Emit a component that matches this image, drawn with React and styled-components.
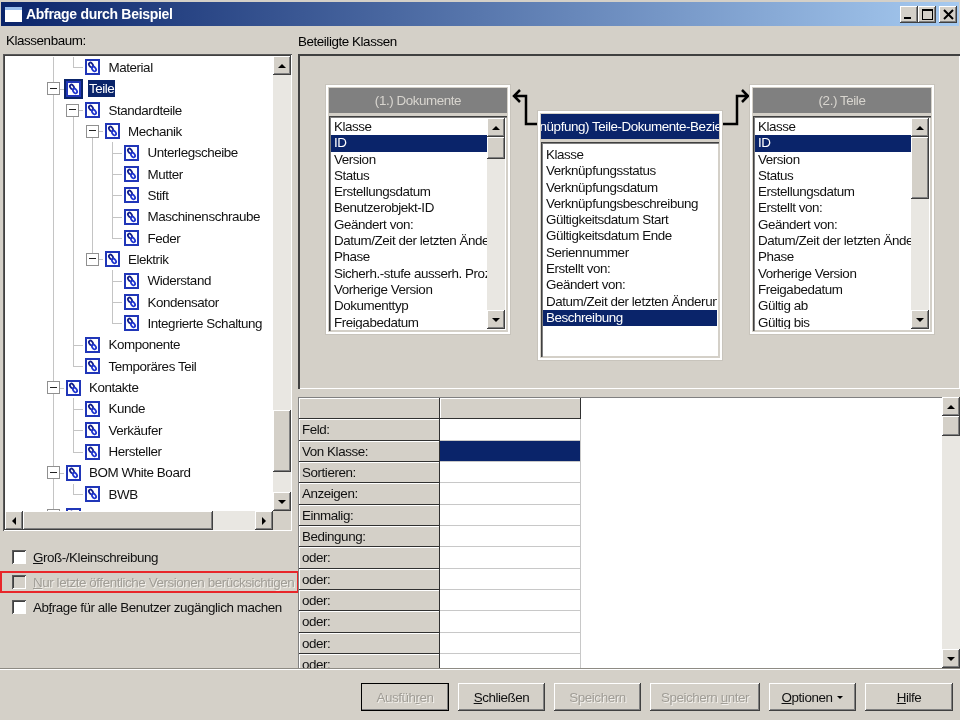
import React from 'react';
import styled, { createGlobalStyle, css } from 'styled-components';

const raised = css`
    background: #d4d0c8;
    box-shadow: inset -1px -1px 0 #404040, inset 1px 1px 0 #ffffff, inset -2px -2px 0 #808080;
`;
const sunken = css`
    box-shadow: inset 1px 1px 0 #5a5a5a, inset -1px -1px 0 #ffffff, inset 2px 2px 0 #404040;
`;

const baum = [
    { name: 'Material', level: 1, guides: ['pipe', 'elbow'] },
    { name: 'Teile', level: 0, guides: ['tee'], open: true, selected: true },
    { name: 'Standardteile', level: 1, guides: ['pipe', 'start'], open: true },
    { name: 'Mechanik', level: 2, guides: ['pipe', 'pipe', 'start'], open: true },
    { name: 'Unterlegscheibe', level: 3, guides: ['pipe', 'pipe', 'pipe', 'tee'] },
    { name: 'Mutter', level: 3, guides: ['pipe', 'pipe', 'pipe', 'tee'] },
    { name: 'Stift', level: 3, guides: ['pipe', 'pipe', 'pipe', 'tee'] },
    { name: 'Maschinenschraube', level: 3, guides: ['pipe', 'pipe', 'pipe', 'tee'] },
    { name: 'Feder', level: 3, guides: ['pipe', 'pipe', 'pipe', 'elbow'] },
    { name: 'Elektrik', level: 2, guides: ['pipe', 'pipe', 'elbow'], open: true },
    { name: 'Widerstand', level: 3, guides: ['pipe', 'pipe', 'none', 'tee'] },
    { name: 'Kondensator', level: 3, guides: ['pipe', 'pipe', 'none', 'tee'] },
    { name: 'Integrierte Schaltung', level: 3, guides: ['pipe', 'pipe', 'none', 'elbow'] },
    { name: 'Komponente', level: 1, guides: ['pipe', 'tee'] },
    { name: 'Temporäres Teil', level: 1, guides: ['pipe', 'elbow'] },
    { name: 'Kontakte', level: 0, guides: ['tee'], open: true },
    { name: 'Kunde', level: 1, guides: ['pipe', 'tee'] },
    { name: 'Verkäufer', level: 1, guides: ['pipe', 'tee'] },
    { name: 'Hersteller', level: 1, guides: ['pipe', 'elbow'] },
    { name: 'BOM White Board', level: 0, guides: ['tee'], open: true },
    { name: 'BWB', level: 1, guides: ['pipe', 'elbow'] },
    { name: 'Projekte', level: 0, guides: ['tee'], open: true },
];

const dokumente = ['Klasse', 'ID', 'Version', 'Status', 'Erstellungsdatum', 'Benutzerobjekt-ID', 'Geändert von:', 'Datum/Zeit der letzten Änderung', 'Phase', 'Sicherh.-stufe ausserh. Prozess', 'Vorherige Version', 'Dokumenttyp', 'Freigabedatum'];
const verknuepfung = ['Klasse', 'Verknüpfungsstatus', 'Verknüpfungsdatum', 'Verknüpfungsbeschreibung', 'Gültigkeitsdatum Start', 'Gültigkeitsdatum Ende', 'Seriennummer', 'Erstellt von:', 'Geändert von:', 'Datum/Zeit der letzten Änderung', 'Beschreibung'];
const teile = ['Klasse', 'ID', 'Version', 'Status', 'Erstellungsdatum', 'Erstellt von:', 'Geändert von:', 'Datum/Zeit der letzten Änderung', 'Phase', 'Vorherige Version', 'Freigabedatum', 'Gültig ab', 'Gültig bis'];
const zeilen = ['Feld:', 'Von Klasse:', 'Sortieren:', 'Anzeigen:', 'Einmalig:', 'Bedingung:', 'oder:', 'oder:', 'oder:', 'oder:', 'oder:', 'oder:'];

function KlassenIcon() {
    return (
        <svg width="15" height="16" viewBox="0 0 15 16">
            <rect x="1" y="1" width="13" height="14" fill="#ffffff" stroke="#2036b8" strokeWidth="2" />
            <ellipse cx="6" cy="6" rx="1.7" ry="2.6" transform="rotate(-35 6 6)" fill="none" stroke="#14208c" strokeWidth="1.8" />
            <ellipse cx="9" cy="10" rx="1.7" ry="2.6" transform="rotate(-35 9 10)" fill="none" stroke="#2036d0" strokeWidth="1.8" />
        </svg>
    );
}

function Scrollbar({ thumbTop, thumbHeight }) {
    return (
        <VScroll>
            <ScrollButton><Arrow dir="up" /></ScrollButton>
            <VTrack>
                <VThumb top={thumbTop} size={thumbHeight} />
            </VTrack>
            <ScrollButton><Arrow dir="down" /></ScrollButton>
        </VScroll>
    );
}

function KlassenFenster({ x, y, titel, active, eintraege, selected, thumbTop, thumbHeight }) {
    return (
        <Fenster x={x} y={y}>
            <FensterTitel active={active}><span>{titel}</span></FensterTitel>
            <ListFrame>
                <Liste active={active}>
                    {eintraege.map((e, i) => <ListItem key={i} selected={e === selected}>{e}</ListItem>)}
                </Liste>
                {thumbHeight ? <Scrollbar thumbTop={thumbTop} thumbHeight={thumbHeight} /> : null}
            </ListFrame>
        </Fenster>
    );
}

export default function App() {
    return (
        <>
            <Global />
            <Dialog>
                <TitleBar>
                    <TitleIcon />
                    <TitleText>Abfrage durch Beispiel</TitleText>
                    <WindowButtons>
                        <WindowButton><MinGlyph /></WindowButton>
                        <WindowButton><MaxGlyph /></WindowButton>
                        <WindowButton close>
                            <svg width="11" height="11" viewBox="0 0 11 11">
                                <path d="M1 1 L10 10 M10 1 L1 10" stroke="#000" strokeWidth="2" />
                            </svg>
                        </WindowButton>
                    </WindowButtons>
                </TitleBar>
                <Body>
                    <LeftColumn>
                        <Heading>Klassenbaum:</Heading>
                        <TreeFrame>
                            <TreeTop>
                                <TreeList>
                                    {baum.map(k => (
                                        <TreeRow key={k.name}>
                                            {k.guides.map((g, i) => (
                                                <Guide key={i} kind={g}>
                                                    {k.open && i === k.level ? <Expander /> : null}
                                                </Guide>
                                            ))}
                                            <IconCell selected={k.selected}><KlassenIcon /></IconCell>
                                            <TreeLabel selected={k.selected}>{k.name}</TreeLabel>
                                        </TreeRow>
                                    ))}
                                </TreeList>
                                <Scrollbar thumbTop={335} thumbHeight={62} />
                            </TreeTop>
                            <HScrollRow>
                                <HScroll>
                                    <ScrollButton><Arrow dir="left" /></ScrollButton>
                                    <HThumb />
                                    <HTrack />
                                    <ScrollButton><Arrow dir="right" /></ScrollButton>
                                </HScroll>
                                <Corner />
                            </HScrollRow>
                        </TreeFrame>
                        <Options>
                            <CheckRow>
                                <CheckBox />
                                <CheckLabel><u>G</u>roß-/Kleinschreibung</CheckLabel>
                            </CheckRow>
                            <CheckRow marked>
                                <CheckBox disabled />
                                <CheckLabel disabled><u>N</u>ur letzte öffentliche Versionen berücksichtigen</CheckLabel>
                            </CheckRow>
                            <CheckRow>
                                <CheckBox />
                                <CheckLabel>Ab<u>f</u>rage für alle Benutzer zugänglich machen</CheckLabel>
                            </CheckRow>
                        </Options>
                    </LeftColumn>
                    <RightColumn>
                        <Heading>Beteiligte Klassen</Heading>
                        <Canvas>
                            <Verbinder width="662" height="335">
                                <path d="M240 70 H228 V42 H216 M222 36 L216 42 L222 48" />
                                <path d="M424 70 H439 V42 H449 M444 36 L450 42 L444 48" />
                            </Verbinder>
                            <KlassenFenster x={28} y={31} titel="(1.) Dokumente" eintraege={dokumente} selected="ID" thumbTop={0} thumbHeight={22} />
                            <KlassenFenster x={240} y={57} titel="(Verknüpfung) Teile-Dokumente-Beziehung" active eintraege={verknuepfung} selected="Beschreibung" />
                            <KlassenFenster x={452} y={31} titel="(2.) Teile" eintraege={teile} selected="ID" thumbTop={0} thumbHeight={62} />
                        </Canvas>
                        <GridSection>
                            <GridTable>
                                <HeaderCell />
                                <HeaderCell />
                                {zeilen.map((z, i) => (
                                    <React.Fragment key={i}>
                                        <RowHeader>{z}</RowHeader>
                                        <ValueCell selected={i === 1} />
                                    </React.Fragment>
                                ))}
                            </GridTable>
                            <Scrollbar thumbTop={0} thumbHeight={20} />
                        </GridSection>
                    </RightColumn>
                </Body>
                <Footer>
                    <Button width={88} disabled isDefault><span>Ausfüh<u>r</u>en</span></Button>
                    <Button width={87}><span><u>S</u>chließen</span></Button>
                    <Button width={87} disabled><span>Speichern</span></Button>
                    <Button width={110} disabled><span>Speichern <u>u</u>nter</span></Button>
                    <Button width={87}><span><u>O</u>ptionen</span><Caret /></Button>
                    <Button width={88}><span><u>H</u>ilfe</span></Button>
                </Footer>
            </Dialog>
        </>
    );
}

const Global = createGlobalStyle`
    html, body {
        margin: 0;
        padding: 0;
        background: #d4d0c8;
    }
    * {
        box-sizing: border-box;
    }
`;
const Dialog = styled.div`
    width: 960px;
    height: 720px;
    overflow: hidden;
    display: flex;
    flex-direction: column;
    background: #d4d0c8;
    padding-top: 2px;
    font-family: "Liberation Sans", Arial, sans-serif;
    font-size: 13.4px;
    letter-spacing: -0.43px;
    color: #000;
    filter: blur(0.35px);
`;
const TitleBar = styled.div`
    height: 24px;
    margin: 0 1px;
    flex: none;
    display: flex;
    align-items: center;
    padding: 0 2px 0 4px;
    background: linear-gradient(to right, #0a246a, #a6caf0);
`;
const TitleIcon = styled.div`
    width: 17px;
    height: 15px;
    background: #ffffff;
    border-top: 3px solid #9cc0ee;
    margin-right: 4px;
`;
const TitleText = styled.div`
    color: #ffffff;
    font-weight: bold;
    font-size: 14px;
    letter-spacing: -0.3px;
`;
const WindowButtons = styled.div`
    margin-left: auto;
    display: flex;
`;
const WindowButton = styled.div`
    ${raised}
    width: 18px;
    height: 17px;
    margin-left: ${props => props.close ? '3px' : '0'};
    display: flex;
    align-items: center;
    justify-content: center;
`;
const MinGlyph = styled.div`
    width: 7px;
    height: 2px;
    background: #000;
    margin-top: 8px;
    margin-right: 3px;
`;
const MaxGlyph = styled.div`
    width: 11px;
    height: 11px;
    border: 1px solid #000;
    border-top-width: 2px;
`;
const Body = styled.div`
    height: 642px;
    flex: none;
    display: flex;
`;
const LeftColumn = styled.div`
    width: 298px;
    flex: none;
    padding-left: 3px;
    display: flex;
    flex-direction: column;
`;
const RightColumn = styled.div`
    flex: 1;
    min-width: 0;
    display: flex;
    flex-direction: column;
`;
const Heading = styled.div`
    height: 28px;
    flex: none;
    padding: 7px 0 0 3px;
    white-space: nowrap;
    ${RightColumn} & {
        padding: 8px 0 0;
    }
`;
const TreeFrame = styled.div`
    ${sunken}
    width: 289px;
    height: 477px;
    flex: none;
    padding: 2px 1px 1px 2px;
    display: flex;
    flex-direction: column;
    background: #ffffff;
`;
const TreeTop = styled.div`
    flex: 1;
    min-height: 0;
    display: flex;
`;
const TreeList = styled.div`
    flex: 1;
    min-width: 0;
    padding: 0.7px 0 0 39px;
    overflow: hidden;
`;
const TreeRow = styled.div`
    height: 21.35px;
    display: flex;
    align-items: center;
    white-space: nowrap;
`;
const Guide = styled.div`
    position: relative;
    width: 19.5px;
    height: 100%;
    flex: none;
    display: flex;
    align-items: center;
    justify-content: center;
    ${props => props.kind !== 'none' && css`
        &::before {
            content: '';
            position: absolute;
            left: 9px;
            top: ${props.kind === 'start' ? '50%' : '0'};
            bottom: ${props.kind === 'elbow' ? '50%' : '0'};
            border-left: 1px solid #c4c4c4;
        }
    `}
    ${props => (props.kind === 'tee' || props.kind === 'elbow' || props.kind === 'start') && css`
        &::after {
            content: '';
            position: absolute;
            left: 9px;
            right: 0;
            top: 50%;
            border-top: 1px solid #c4c4c4;
        }
    `}
`;
const Expander = styled.div`
    position: relative;
    z-index: 1;
    width: 13px;
    height: 13px;
    background: #ffffff;
    border: 1.5px solid #909090;
    margin-left: -1px;
    &::after {
        content: '';
        position: absolute;
        left: 2px;
        right: 2px;
        top: 4.5px;
        height: 1px;
        background: #222;
    }
`;
const IconCell = styled.div`
    width: 19.5px;
    height: 100%;
    flex: none;
    display: flex;
    align-items: center;
    justify-content: center;
    svg {
        outline: ${props => props.selected ? '2px solid #0a246a' : 'none'};
    }
`;
const TreeLabel = styled.div`
    margin-left: 5px;
    padding: 0 1px;
    line-height: 17px;
    color: ${props => props.selected ? '#ffffff' : '#111'};
    background: ${props => props.selected ? '#0a246a' : 'transparent'};
`;
const VScroll = styled.div`
    width: 18px;
    flex: none;
    display: flex;
    flex-direction: column;
`;
const ScrollButton = styled.div`
    ${raised}
    width: 18px;
    height: 19px;
    flex: none;
    display: flex;
    align-items: center;
    justify-content: center;
`;
const Arrow = styled.div`
    width: 0;
    height: 0;
    border: 4.5px solid transparent;
    ${props => props.dir === 'up' && 'border-bottom-color: #000; border-top-width: 0;'}
    ${props => props.dir === 'down' && 'border-top-color: #000; border-bottom-width: 0;'}
    ${props => props.dir === 'left' && 'border-right-color: #000; border-left-width: 0;'}
    ${props => props.dir === 'right' && 'border-left-color: #000; border-right-width: 0;'}
`;
const VTrack = styled.div`
    flex: 1;
    min-height: 0;
    background: #e9e7e2;
    overflow: hidden;
`;
const VThumb = styled.div`
    ${raised}
    height: ${props => props.size}px;
    margin-top: ${props => props.top}px;
`;
const HScrollRow = styled.div`
    height: 19px;
    flex: none;
    display: flex;
`;
const HScroll = styled.div`
    flex: 1;
    display: flex;
`;
const HThumb = styled.div`
    ${raised}
    width: 190px;
`;
const HTrack = styled.div`
    flex: 1;
    background: #e9e7e2;
`;
const Corner = styled.div`
    width: 18px;
    flex: none;
    background: #d4d0c8;
`;
const Options = styled.div`
    margin: 15px 0 0 -3px;
    display: flex;
    flex-direction: column;
    gap: 3px;
`;
const CheckRow = styled.div`
    width: 299px;
    height: 22px;
    display: flex;
    align-items: center;
    padding-left: 12px;
    white-space: nowrap;
    overflow: hidden;
    outline: ${props => props.marked ? '2.5px solid #e8262a' : 'none'};
    outline-offset: -2.5px;
`;
const CheckBox = styled.div`
    ${sunken}
    width: 14px;
    height: 14px;
    flex: none;
    margin-right: 7px;
    background: ${props => props.disabled ? '#d4d0c8' : '#ffffff'};
`;
const CheckLabel = styled.div`
    color: ${props => props.disabled ? '#a09d96' : '#111'};
    ${props => props.disabled && 'text-shadow: 1px 1px 0 #f2f0ec;'}
`;
const Canvas = styled.div`
    position: relative;
    height: 335px;
    flex: none;
    box-shadow: inset 2px 2px 0 #404040, inset -1px -1px 0 #ffffff;
    overflow: hidden;
`;
const Verbinder = styled.svg`
    position: absolute;
    left: 0;
    top: 0;
    fill: none;
    stroke: #000;
    stroke-width: 2.5;
`;
const Fenster = styled.div`
    position: absolute;
    left: ${props => props.x}px;
    top: ${props => props.y}px;
    width: 184px;
    height: 249px;
    padding: 3px;
    display: flex;
    flex-direction: column;
    gap: 3px;
    background: #d4d0c8;
    box-shadow: inset 2px 2px 0 #ffffff, inset -2px -2px 0 #ffffff, 0 0 0 1px #c8c4bc;
`;
const FensterTitel = styled.div`
    height: 25px;
    flex: none;
    display: flex;
    justify-content: center;
    align-items: center;
    overflow: hidden;
    white-space: nowrap;
    background: ${props => props.active ? '#0a246a' : '#808080'};
    color: ${props => props.active ? '#ffffff' : '#d8d5cf'};
    span {
        flex: none;
    }
`;
const ListFrame = styled.div`
    flex: 1;
    min-height: 0;
    display: flex;
    padding: 2px;
    background: #ffffff;
    box-shadow: inset 1px 1px 0 #404040, inset 2px 2px 0 #808080, inset -1px -1px 0 #d4d0c8;
`;
const Liste = styled.div`
    flex: 1;
    min-width: 0;
    padding-top: ${props => props.active ? '3px' : '1px'};
    overflow: hidden;
`;
const ListItem = styled.div`
    height: 16.3px;
    line-height: 16px;
    padding-left: 3px;
    white-space: nowrap;
    overflow: hidden;
    color: ${props => props.selected ? '#ffffff' : '#111'};
    background: ${props => props.selected ? '#0a246a' : 'transparent'};
`;
const GridSection = styled.div`
    height: 271px;
    margin-top: 8px;
    flex: none;
    display: flex;
    background: #ffffff;
    box-shadow: inset 1px 1px 0 #808080;
    overflow: hidden;
`;
const GridTable = styled.div`
    flex: 1;
    min-width: 0;
    padding: 1px 0 0 1px;
    display: grid;
    grid-template-columns: 141px 141px;
    grid-auto-rows: 21.35px;
    align-content: start;
`;
const HeaderCell = styled.div`
    background: #d4d0c8;
    box-shadow: inset -1px -1px 0 #303030, inset 1px 1px 0 #ffffff;
`;
const RowHeader = styled.div`
    background: #d4d0c8;
    box-shadow: inset -1px -1px 0 #303030, inset 1px 1px 0 #ffffff;
    padding-left: 3px;
    line-height: 21px;
    color: #111;
`;
const ValueCell = styled.div`
    background: ${props => props.selected ? '#0a246a' : '#ffffff'};
    border-right: 1px solid #c8c8c8;
    border-bottom: 1px solid #c8c8c8;
`;
const Footer = styled.div`
    flex: 1;
    min-height: 0;
    border-top: 1px solid #8e8b84;
    box-shadow: inset 0 1px 0 #ffffff;
    display: flex;
    gap: 9px;
    justify-content: flex-end;
    align-items: flex-start;
    padding: 14px 7px 0 0;
`;
const Button = styled.div`
    ${raised}
    width: ${props => props.width}px;
    height: 28px;
    display: flex;
    align-items: center;
    justify-content: center;
    white-space: pre;
    color: ${props => props.disabled ? '#a09d96' : '#111'};
    ${props => props.disabled && 'text-shadow: 1px 1px 0 #f2f0ec;'}
    ${props => props.isDefault && 'outline: 1px solid #000; outline-offset: -1px;'}
`;
const Caret = styled.span`
    width: 0;
    height: 0;
    margin-left: 5px;
    border: 3.5px solid transparent;
    border-top-color: #000;
    border-bottom-width: 0;
`;
